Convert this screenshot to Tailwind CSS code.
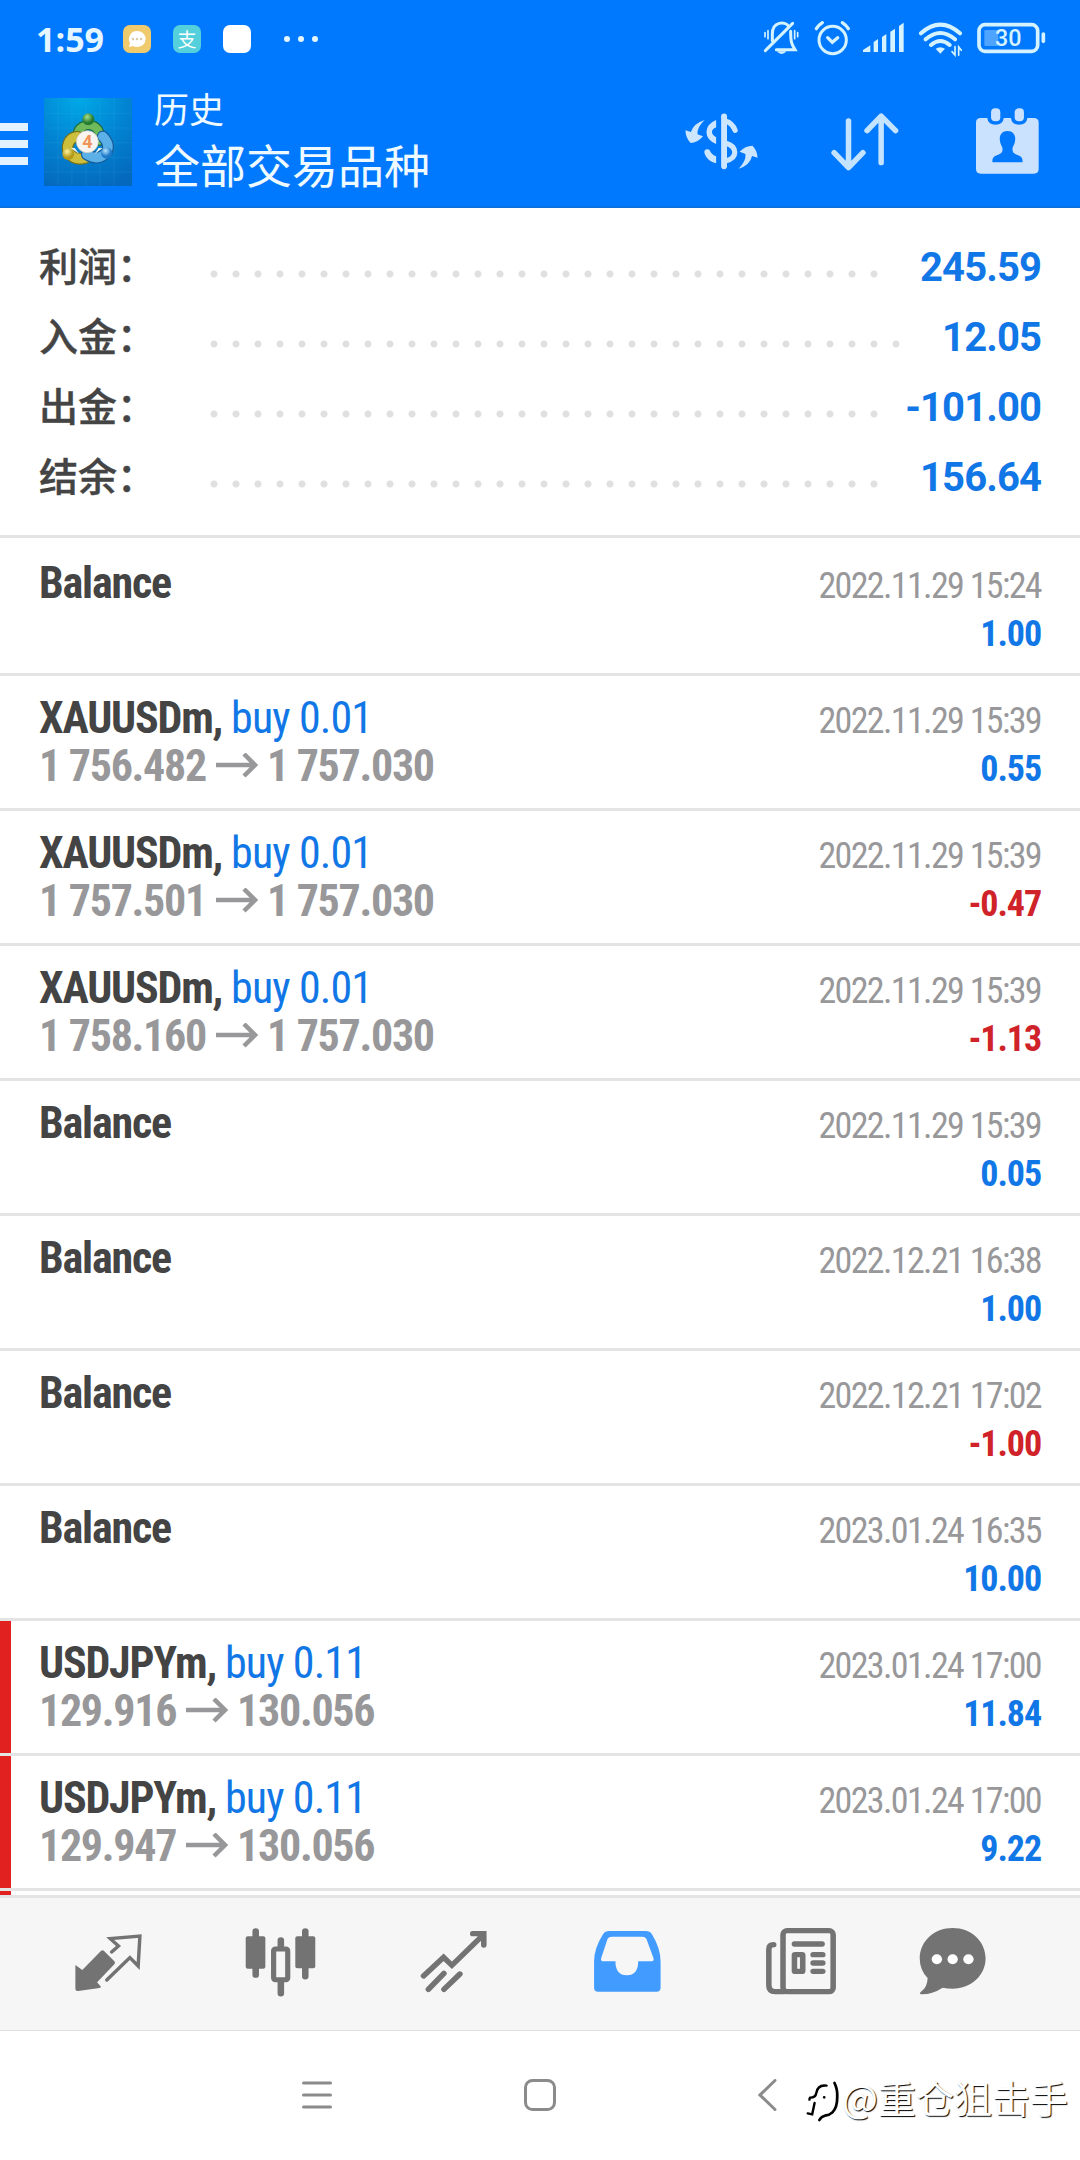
<!DOCTYPE html>
<html lang="zh-CN">
<head>
<meta charset="utf-8">
<title>历史</title>
<script src="https://cdn.jsdelivr.net/npm/@tailwindcss/browser@4"></script>
</head>
<body class="w-[1080px] h-[2160px] overflow-hidden bg-white flex flex-col font-[Roboto,'Noto_Sans_CJK_SC',sans-serif]">

<header class="h-[208px] shrink-0 bg-[#0079ff] border-b-2 border-[#0a70e0] flex flex-col">
  <!-- status bar -->
  <div class="h-[78px] flex items-center pl-[36px] pr-[33px] text-[#e6f6ff]">
    <span class="w-[87px] text-[34px] leading-[40px] font-bold font-['Open_Sans',sans-serif]">1:59</span>
    <div class="flex items-center gap-[22px]">
      <svg width="28" height="28" viewBox="0 0 28 28"><rect width="28" height="28" rx="7" fill="#f0cb6e"/><path d="M14 6a8.5 8 0 1 1-4 15l-4 1 1-4A8 8 0 0 1 14 6z" fill="#fff"/><g fill="#d8c9a0"><circle cx="10" cy="14" r="1.2"/><circle cx="14" cy="14" r="1.2"/><circle cx="18" cy="14" r="1.2"/></g></svg>
      <span class="size-[28px] rounded-[7px] bg-[#54cfdc] text-white text-[19px] leading-[27px] text-center font-['Noto_Sans_CJK_SC',sans-serif]">支</span>
      <span class="size-[28px] rounded-[7px] bg-white"></span>
    </div>
    <div class="ml-[33px] flex gap-[8px]"><i class="size-[6px] rounded-full bg-[#e6f6ff]"></i><i class="size-[6px] rounded-full bg-[#e6f6ff]"></i><i class="size-[6px] rounded-full bg-[#e6f6ff]"></i></div>
    <!-- muted, alarm, signal, wifi and battery -->
    <svg class="ml-auto" width="284" height="40" viewBox="38 27 852 120" fill="none" stroke="#d4f3ff" stroke-width="9" stroke-linecap="round">
      <path d="M66 92V72c0-40 40-36 46-26M121 64c0 30 2 38 13 55H78M45 122L127 40"/>
      <path d="M80 124h28q-5 8-14 8t-14-8z" fill="#d4f3ff" stroke="none"/>
      <path d="M44 68v12M53 62v24M142 68v12M133 62v24" stroke-width="5"/>
      <circle cx="247" cy="90" r="41"/><path d="M232 83l14 14 16-14M198 56q6-10 18-18M294 56q-6-10-18-18" stroke-width="10"/>
      <g fill="#d4f3ff" stroke="none"><path d="M338 126v-6l22-14v20zM370 126v-30l13-9v39zM395 126V81l13-9v54zM420 126V65l14-9v70zM446 126V48l14-10v88z"/></g>
      <path d="M512 70Q570 18 629 70M526 88q44-38 88 0M542 105q28-24 56 0" stroke-width="12"/>
      <path d="M556 116q14-9 28 0l-14 15z" fill="#d4f3ff" stroke="none"/>
      <path d="M614 110v25l-9-10M625 136v-25l8 10" stroke-width="5"/>
      <rect x="686" y="44" width="176" height="80" rx="18" stroke-width="11"/>
      <rect x="702" y="60" width="42" height="48" rx="4" fill="#4ea4ff" stroke="none"/>
      <path d="M879 72v22" stroke-width="11"/>
      <text x="774" y="109" text-anchor="middle" font-family="Roboto, sans-serif" font-size="70" font-weight="500" fill="#d4f3ff" stroke="none">30</text>
    </svg>
  </div>
  <!-- toolbar -->
  <div class="h-[128px] flex items-center pr-[41px]">
    <div class="w-[28px] flex flex-col gap-[9px] mt-[4px]"><i class="h-[8px] bg-[#e2f3ff]"></i><i class="h-[8px] bg-[#e2f3ff]"></i><i class="h-[8px] bg-[#e2f3ff]"></i></div>
    <svg class="ml-[16px]" width="88" height="88" viewBox="12 24 264 264">
      <defs>
        <radialGradient id="sky" cx=".4" cy="0" r="1.05"><stop offset="0" stop-color="#00a9e8"/><stop offset=".5" stop-color="#0285d3"/><stop offset="1" stop-color="#0469bd"/></radialGradient>
        <radialGradient id="gr" cx=".4" cy=".3"><stop offset="0" stop-color="#a8e08a"/><stop offset="1" stop-color="#257a33"/></radialGradient>
        <radialGradient id="ye" cx=".4" cy=".3"><stop offset="0" stop-color="#fff3a0"/><stop offset="1" stop-color="#b39a18"/></radialGradient>
        <radialGradient id="bl" cx=".4" cy=".3"><stop offset="0" stop-color="#b4e4ff"/><stop offset="1" stop-color="#1c78c8"/></radialGradient>
      </defs>
      <rect x="12" y="24" width="264" height="264" fill="url(#sky)"/>
      <path d="M54 24v264M96 24v264M138 24v264M180 24v264M222 24v264M12 70h264M12 114h264M12 158h264M12 202h264M12 246h264" stroke="#4fc0f0" stroke-opacity=".2" stroke-width="2"/>
      <g fill="none" stroke-linecap="round">
        <path d="M112 134a34 34 0 1 1 65 18" stroke="#1e6a38" stroke-width="31"/>
        <path d="M112 134a34 34 0 1 1 65 18" stroke="#6fbb5c" stroke-width="24"/>
        <path d="M112 140a32 32 0 0 0-22 52q16 20 46 12" stroke="#77731c" stroke-width="35"/>
        <path d="M112 140a32 32 0 0 0-22 52q16 20 46 12" stroke="#cdbf3c" stroke-width="28"/>
        <path d="M188 139q24 24 12 48-26 28-60 6" stroke="#155a97" stroke-width="35"/>
        <path d="M188 139q24 24 12 48-26 28-60 6" stroke="#5bb0e8" stroke-width="28"/>
      </g>
      <path d="M118 192l-14-18h-12zM164 192l12-18h12z" fill="#eaf6fa"/>
      <circle cx="145" cy="88" r="18" fill="url(#gr)"/><circle cx="85" cy="192" r="18" fill="url(#ye)"/><circle cx="200" cy="189" r="17" fill="url(#bl)"/>
      <circle cx="142" cy="155" r="33" fill="#f8f5f0" stroke="#c9c5b5" stroke-width="2"/>
      <text x="142" y="174" text-anchor="middle" font-family="Roboto, sans-serif" font-size="54" font-weight="700" fill="#f0955a">4</text>
    </svg>
    <div class="ml-[22px] -mt-[8px] flex flex-col text-[#eefaff] font-['Noto_Sans_CJK_SC',sans-serif]">
      <span class="text-[35px] leading-[50px]">历史</span>
      <span class="text-[46px] leading-[60px]">全部交易品种</span>
    </div>
    <svg class="ml-auto -mt-[3px]" width="76" height="60" viewBox="420 330 220 180" preserveAspectRatio="none" fill="#cde6ff">
      <path d="M424 388l16 5q8-26 40-36-22 20-21 43l16 6q-16 20-36 20-14-14-15-38zM633 470l-16-5q-6 28-39 38 22-22 20-44l-17-7q16-18 37-18 14 14 15 36z"/>
      <path d="M513 357q-28 12-28 36t28 36v-20q-12-7-12-16t12-14zM486 445q-10 2-6 14 8 22 33 28v-21q-12-4-18-17-3-5-9-4z"/>
      <g fill="none" stroke="#cde6ff" stroke-width="15" stroke-linecap="round"><path d="M536 346v150" stroke-width="17"/><path d="M540 360q20 6 28 28M540 426q27 8 27 28t-27 26"/></g>
    </svg>
    <svg class="ml-[71px] -mt-[1px]" width="68" height="60" viewBox="845 335 198 180" preserveAspectRatio="none" fill="none" stroke="#c3e3ff" stroke-width="16" stroke-linecap="round" stroke-linejoin="round"><path d="M896 362v138M854 457l42 45 42-45M991 487V352M950 391l41-44 42 44"/></svg>
    <svg class="ml-[77px] -mt-[3px]" width="63" height="66" viewBox="1267 324 184 198" preserveAspectRatio="none" fill="#cbe2ff">
      <path d="M1281 354h19q2 20 24 20t24-20h21q2 20 24 20t24-20h19q14 0 14 14v139q0 14-14 14h-155q-14 0-14-14V368q0-14 14-14z"/>
      <rect x="1311" y="325" width="27" height="39" rx="12"/><rect x="1380" y="325" width="27" height="39" rx="12"/>
      <path d="M1359 393c-17 0-25 14-22 30 1 9 5 14 7 20 2 12-2 17-12 21-12 4-18 8-17 23h88c1-15-5-19-17-23-10-4-14-9-12-21 2-6 6-11 7-20 3-16-5-30-22-30z" fill="#0079ff"/>
    </svg>
  </div>
</header>

<main class="h-[1687px] shrink-0 overflow-hidden flex flex-col">
  <section id="summary" class="h-[330px] shrink-0 pt-[24px] pl-[39px] pr-[39px] border-b-3 border-[#e4e4e4]"></section>
  <section id="history" class="pt-[3px] flex flex-col"></section>
</main>

<!-- tab bar -->
<nav class="h-[136px] shrink-0 bg-[#f6f6f6] border-t-3 border-b border-t-[#e4e4e4] border-b-[#dedede] pt-[29px] pl-[74px] flex items-start text-[#737373]">
  <svg width="69" height="70" viewBox="215 140 200 210" preserveAspectRatio="none" fill="currentColor">
    <path d="M219 254l20 15 54-57q5-4 9 0l30 31q4 4 0 9l-50 54 11 13q0 3-4 4l-62 9q-8 1-8-7z"/>
    <path d="M324 215l20-18-24-22 86-8-5 90-24-25-67 67" fill="none" stroke="currentColor" stroke-width="10" stroke-linejoin="miter" stroke-linecap="round"/>
  </svg>
  <svg class="ml-[101px]" width="73" height="70" viewBox="710 140 212 210" preserveAspectRatio="none" fill="none" stroke="currentColor" stroke-width="19" stroke-linecap="round">
    <path d="M744 153v130M888 153v135M817 180v20M817 305v34"/>
    <rect x="715" y="168" width="57" height="97" rx="6" fill="currentColor" stroke="none"/><rect x="859" y="168" width="58" height="96" rx="6" fill="currentColor" stroke="none"/>
    <rect x="796" y="206" width="41" height="92" rx="5" stroke-width="15"/>
  </svg>
  <svg class="ml-[102px]" width="70" height="70" viewBox="1218 140 202 210" preserveAspectRatio="none" fill="none" stroke="currentColor" stroke-width="16" stroke-linecap="round" stroke-linejoin="miter">
    <path d="M1231 287l58-56 24 24 91-92M1373 160h32v34M1245 327l45-48M1290 327l46-46"/>
  </svg>
  <svg class="ml-[103px]" width="71" height="70" viewBox="152 140 206 210" preserveAspectRatio="none">
    <path fill-rule="evenodd" fill="#429cff" d="M202 152h106q12 0 18 10 25 42 25 82v78q0 12-12 12H170q-12 0-12-12v-78q0-40 26-82 6-10 18-10zM210 169q-10 0-13 7l-18 56q-4 11 8 11h33q0 42 33 42t33-42h36q12 0 8-11l-20-56q-3-7-13-7z"/>
  </svg>
  <svg class="ml-[101px]" width="74" height="70" viewBox="650 140 214 210" preserveAspectRatio="none" fill="none" stroke="currentColor" stroke-width="16" stroke-linecap="round">
    <rect x="705" y="151" width="145" height="183" rx="12"/><path d="M678 193q-14 0-14 14v108q0 19 18 19h24"/>
    <path d="M738 191h80M792 223h28M792 248h28M792 273h28"/><rect x="738" y="223" width="24" height="50" rx="2"/>
  </svg>
  <svg class="ml-[80px]" width="70" height="70" viewBox="1098 140 204 210" preserveAspectRatio="none" fill="currentColor">
    <path d="M1199 143c54 0 96 40 96 91s-42 91-96 91q-16 0-29-3-28 19-62 20-8-1-2-7 20-14 20-42-23-23-23-59c0-51 42-91 96-91z"/>
    <g fill="#fff"><circle cx="1153" cy="237" r="15"/><circle cx="1199" cy="237" r="15"/><circle cx="1245" cy="237" r="15"/></g>
  </svg>
</nav>

<!-- system navigation -->
<footer class="relative grow pt-[48px] pl-[302px] flex items-start text-[#8b8b8b]">
  <svg width="30" height="32" viewBox="0 0 30 32" stroke="currentColor" stroke-width="3" stroke-linecap="round"><path d="M1.500 4h27M1.500 16h27M1.500 28h27"/></svg>
  <svg class="ml-[192px]" width="32" height="32" viewBox="0 0 32 32" fill="none" stroke="currentColor" stroke-width="3"><rect x="1.500" y="1.500" width="29" height="29" rx="7"/></svg>
  <svg class="ml-[202px]" width="19" height="32" viewBox="0 0 19 32" fill="none" stroke="currentColor" stroke-width="3" stroke-linecap="round"><path d="M17 1.500L2 16l15 14.500"/></svg>
  <div class="absolute left-[806px] top-[40px] flex items-center">
    <svg class="mt-[10px]" width="34" height="42" viewBox="774 610 99 126" preserveAspectRatio="none" fill="none" stroke="#000" stroke-linecap="round"><path d="M834 624q-26-4-30 22-2 14-18 14-2 2-2 6M799 676l-7 34-13-3" stroke-width="7"/><path d="M857 616q9 18 8 42 0 32-14 46-8 8-22 10-11 3-16 13" stroke-width="8"/><circle cx="827" cy="659" r="2" stroke-width="4"/></svg>
    <span class="ml-[2px] text-[38px] leading-[44px] text-white whitespace-nowrap font-['Noto_Sans_CJK_SC',sans-serif] [text-shadow:1px_1px_1px_#000]">@重仓狙击手</span>
  </div>
</footer>

<script>
const totals = [['利润','245.59',31],['入金','12.05',32],['出金','-101.00',31],['结余','156.64',31]];
document.getElementById('summary').innerHTML = totals.map(([name, value, dots]) => `
  <div class="h-[70px] flex items-center">
    <span class="w-[164px] -mt-[6px] text-[39px] leading-[70px] font-medium text-[#444] whitespace-nowrap font-['Noto_Sans_CJK_SC',sans-serif] [-webkit-text-stroke:0.4px_#444]">${name}：</span>
    <span class="h-[22px] mt-[14px] bg-[radial-gradient(circle,#e0e0e0_3px,transparent_4px)] bg-[length:22px_22px]" style="width:${dots * 22}px"></span>
    <span class="ml-auto mt-[2px] text-[40px] leading-[70px] font-bold tracking-[-0.9px] text-[#1277e6]">${value}</span>
  </div>`).join('');

const deals = [
  ['Balance','','','','2022.11.29 15:24','1.00'],
  ['XAUUSDm','buy 0.01','1 756.482','1 757.030','2022.11.29 15:39','0.55'],
  ['XAUUSDm','buy 0.01','1 757.501','1 757.030','2022.11.29 15:39','-0.47'],
  ['XAUUSDm','buy 0.01','1 758.160','1 757.030','2022.11.29 15:39','-1.13'],
  ['Balance','','','','2022.11.29 15:39','0.05'],
  ['Balance','','','','2022.12.21 16:38','1.00'],
  ['Balance','','','','2022.12.21 17:02','-1.00'],
  ['Balance','','','','2023.01.24 16:35','10.00'],
  ['USDJPYm','buy 0.11','129.916','130.056','2023.01.24 17:00','11.84',1],
  ['USDJPYm','buy 0.11','129.947','130.056','2023.01.24 17:00','9.22',1],
  ['','','','','','',1],
];
const arrow = '<svg class="ml-[10px] mr-[9px]" width="42" height="26" viewBox="0 0 42 26" fill="none" stroke="currentColor" stroke-width="4.5"><path d="M0 12h39M28 1l11 11-11 11"/></svg>';
document.getElementById('history').innerHTML = deals.map(([symbol, order, open, close, time, profit, stop]) => `
  <div class="h-[135px] shrink-0 border-b-3 border-[#e4e4e4] flex font-stretch-condensed">
    <i class="w-[11px] ${stop ? 'bg-[#e12020]' : 'bg-transparent'}"></i>
    <div class="ml-[28px] pt-[18px] flex flex-col text-[44px] leading-[48px] font-bold whitespace-nowrap">
      <span class="text-[#444] tracking-[-1.2px]">${symbol}${order ? `, <span class="font-normal tracking-[-0.9px] text-[#1277e6]">${order}</span>` : ''}</span>
      <span class="flex items-center text-[#98989a] tracking-[-1.3px]">${open}${open ? arrow : ''}${close}</span>
    </div>
    <div class="ml-auto mr-[39px] pt-[21px] flex flex-col items-end text-[36px] leading-[48px] whitespace-nowrap">
      <span class="text-[#98989a] tracking-[-1.65px]">${time}</span>
      <span class="font-bold tracking-[-1.1px] ${profit.startsWith('-') ? 'text-[#cf2229]' : 'text-[#1277e6]'}">${profit}</span>
    </div>
  </div>`).join('');
</script>
</body>
</html>
